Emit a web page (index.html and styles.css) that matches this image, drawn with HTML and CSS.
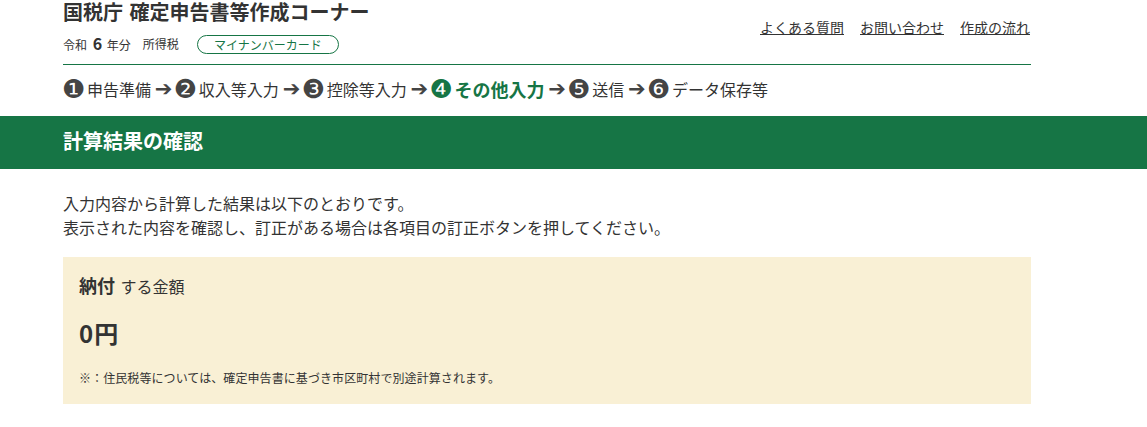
FILE: index.html
```html
<!DOCTYPE html>
<html lang="ja">
<head>
  <meta charset="UTF-8">
  <title>計算結果の確認</title>
  <link rel="stylesheet" href="styles.css">
</head>
<body>
  <header class="container header">
    <div class="header-top">
      <div>
        <div class="site-title">国税庁 確定申告書等作成コーナー</div>
        <div class="sub-info">
          <span>令和 <b class="year">6</b> 年分</span>
          <span class="tax">所得税</span>
          <span class="pill">マイナンバーカード</span>
        </div>
      </div>
      <nav class="links">
        <a href="#">よくある質問</a>
        <a href="#">お問い合わせ</a>
        <a href="#">作成の流れ</a>
      </nav>
    </div>
    <ol class="steps">
      <li><span class="num">❶</span>申告準備</li>
      <li class="arrow">➔</li>
      <li><span class="num">❷</span>収入等入力</li>
      <li class="arrow">➔</li>
      <li><span class="num">❸</span>控除等入力</li>
      <li class="arrow">➔</li>
      <li class="current"><span class="num">❹</span>その他入力</li>
      <li class="arrow">➔</li>
      <li><span class="num">❺</span>送信</li>
      <li class="arrow">➔</li>
      <li><span class="num">❻</span>データ保存等</li>
    </ol>
  </header>

  <div class="band">
    <h1 class="container">計算結果の確認</h1>
  </div>

  <main class="container">
    <p class="lead">入力内容から計算した結果は以下のとおりです。<br>表示された内容を確認し、訂正がある場合は各項目の訂正ボタンを押してください。</p>
    <section class="result">
      <div class="result-title"><b>納付</b> する金額</div>
      <div class="amount">0円</div>
      <p class="note">※：住民税等については、確定申告書に基づき市区町村で別途計算されます。</p>
    </section>
  </main>
</body>
</html>
```

FILE: styles.css
```css
body {
  margin: 0;
  font-family: "Noto Sans CJK JP", "Noto Sans", sans-serif;
  color: #333;
  background: #fff;
  font-size: 16px;
}

.container {
  width: 968px;
  margin-left: 63px;
}

.header-top {
  display: flex;
  justify-content: space-between;
  border-bottom: 1px solid #167545;
  height: 64px;
}

.site-title {
  font-size: 20px;
  font-weight: bold;
  line-height: 24px;
  word-spacing: 2px;
}

.sub-info {
  display: flex;
  align-items: center;
  font-size: 12px;
  line-height: 20px;
  margin-top: 9px;
}

.year {
  font-size: 16px;
  margin: 0 2px 0 3px;
}

.tax {
  margin-left: 12px;
}

.pill {
  width: 140px;
  margin-left: 18px;
  text-align: center;
  border: 1px solid #167545;
  border-radius: 10px;
  color: #167545;
  line-height: 17px;
}

.links {
  display: flex;
  gap: 16px;
  font-size: 14px;
  line-height: 20px;
  padding: 17px 1px 0 0;
}

.links a {
  color: #333;
}

.steps {
  display: flex;
  align-items: center;
  list-style: none;
  margin: 0;
  padding: 0 0 4px;
  height: 47px;
}

.steps li {
  display: flex;
  align-items: center;
  line-height: 24px;
}

.num {
  font-family: "DejaVu Sans", sans-serif;
  font-size: 26px;
  width: 25px;
  margin-left: -1px;
  color: #444;
}

.steps .arrow {
  font-family: "DejaVu Sans", sans-serif;
  font-size: 21px;
  width: 20px;
  margin: 0 0 0 3.8px;
  color: #444;
}

.steps .current {
  color: #167545;
  font-weight: bold;
  font-size: 18px;
}

.current .num {
  color: #167545;
  font-weight: normal;
}

.band {
  background: #167545;
  height: 53px;
  display: flex;
  align-items: center;
}

.band h1 {
  margin-top: 0;
  margin-bottom: 4px;
  margin-left: 63px;
  color: #fff;
  font-size: 20px;
  line-height: 28px;
}

.lead {
  margin: 22px 0 18px;
  line-height: 24px;
}

.result {
  background: #f9f0d5;
  padding: 14px 16px 16px;
  height: 117px;
}

.result-title {
  line-height: 28px;
  word-spacing: 2px;
}

.result-title b {
  font-size: 18px;
}

.amount {
  font-size: 24px;
  font-weight: bold;
  letter-spacing: 1px;
  line-height: 36px;
  margin-top: 15px;
}

.note {
  font-size: 12px;
  letter-spacing: 0.08px;
  line-height: 18px;
  margin: 18px 0 0;
}
```
